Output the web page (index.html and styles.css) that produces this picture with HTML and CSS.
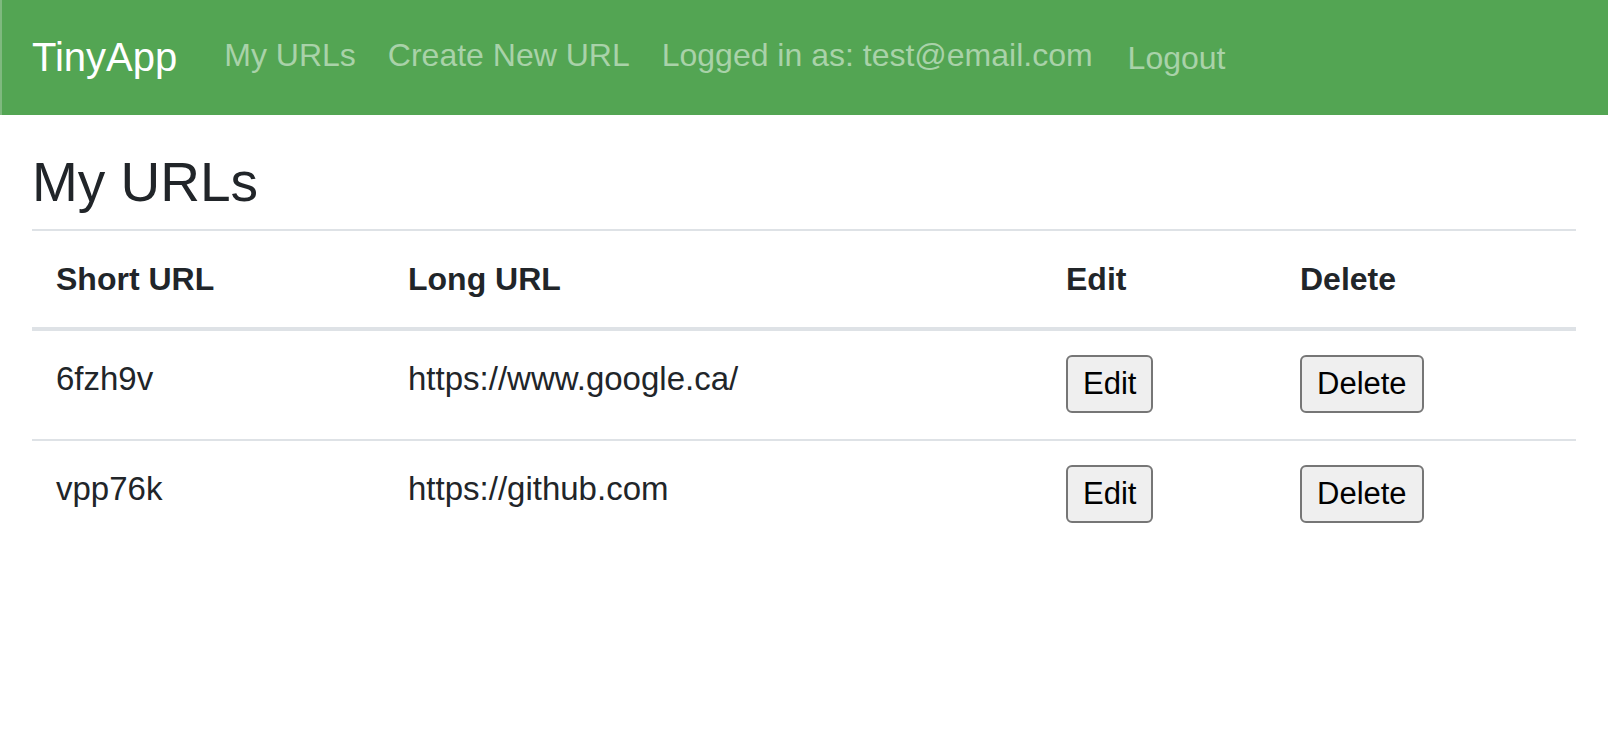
FILE: index.html
```html
<!DOCTYPE html>
<html lang="en">
<head>
<meta charset="utf-8">
<title>TinyApp</title>
<link rel="stylesheet" href="styles.css">
</head>
<body>
<nav class="navbar">
  <a class="brand" href="#">TinyApp</a>
  <ul class="nav-links">
    <li><a class="nav-link" href="#">My URLs</a></li>
    <li><a class="nav-link" href="#">Create New URL</a></li>
    <li><span class="nav-link">Logged in as: test@email.com</span></li>
    <li><form class="logout-form"><button type="button" class="nav-link logout">Logout</button></form></li>
  </ul>
</nav>
<main class="container">
  <h1 class="page-title">My URLs</h1>
  <table class="url-table">
    <colgroup>
      <col class="col-short">
      <col class="col-long">
      <col class="col-edit">
      <col class="col-delete">
    </colgroup>
    <thead>
      <tr>
        <th>Short URL</th>
        <th>Long URL</th>
        <th>Edit</th>
        <th>Delete</th>
      </tr>
    </thead>
    <tbody>
      <tr>
        <td>6fzh9v</td>
        <td>https://www.google.ca/</td>
        <td><button type="button" class="btn">Edit</button></td>
        <td><button type="button" class="btn">Delete</button></td>
      </tr>
      <tr>
        <td>vpp76k</td>
        <td>https://github.com</td>
        <td><button type="button" class="btn">Edit</button></td>
        <td><button type="button" class="btn">Delete</button></td>
      </tr>
    </tbody>
  </table>
</main>
</body>
</html>
```
FILE: styles.css
```css
html, body {
  margin: 0;
  padding: 0;
  background: #ffffff;
}

body {
  font-family: "Liberation Sans", Arial, Helvetica, sans-serif;
  color: #212529;
}

.navbar {
  display: flex;
  align-items: center;
  box-sizing: border-box;
  height: 115px;
  padding: 0 32px 0 30px;
  background: #53a553;
  border-left: 2px solid #7fb97f;
}

.brand {
  font-size: 40px;
  line-height: 60px;
  color: #ffffff;
  text-decoration: none;
  margin: 0 31px 2px 0;
}

.nav-links {
  display: flex;
  align-items: center;
  list-style: none;
  margin: 0;
  padding: 0;
}

.nav-link {
  display: block;
  padding: 0 16px;
  font-size: 32px;
  line-height: 48px;
  color: #a9d2a9;
  text-decoration: none;
  margin-bottom: 5px;
}

.logout-form {
  margin: 0;
}

.logout {
  font-family: inherit;
  background: none;
  border: 0;
  margin: 0 0 0 3px;
  cursor: pointer;
}

.container {
  padding: 34px 32px 0;
}

.page-title {
  font-size: 55px;
  font-weight: 500;
  line-height: 66px;
  margin: 0 0 14px;
  color: #212529;
}

.url-table {
  width: 100%;
  table-layout: fixed;
  border-collapse: collapse;
  font-size: 32px;
}

.col-short { width: 352px; }
.col-long { width: 658px; }
.col-edit { width: 234px; }

.url-table th,
.url-table td {
  padding: 24px;
  line-height: 48px;
  text-align: left;
  vertical-align: top;
  border-top: 2px solid #dee2e6;
}

.url-table td {
  font-size: 33px;
}

.url-table th {
  font-weight: 700;
}

.url-table thead th {
  border-bottom: 4px solid #dee2e6;
}

.btn {
  display: inline-block;
  vertical-align: top;
  margin: 0 0 2px;
  font-family: "Liberation Sans", Arial, sans-serif;
  font-size: 31px;
  line-height: 34px;
  padding: 10px 15px;
  color: #000000;
  background: #efefef;
  border: 2px solid #767676;
  border-radius: 6px;
}
```
